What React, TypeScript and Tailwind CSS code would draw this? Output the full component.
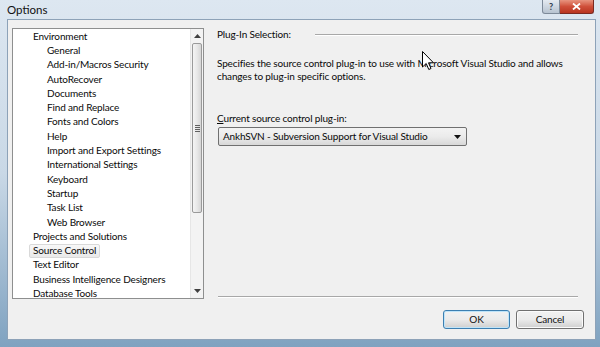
import React from "react";

const font = { fontFamily: 'Lato, "Noto Sans", sans-serif' };

const tree: { label: string; child?: boolean; selected?: boolean }[] = [
  { label: "Environment" },
  { label: "General", child: true },
  { label: "Add-in/Macros Security", child: true },
  { label: "AutoRecover", child: true },
  { label: "Documents", child: true },
  { label: "Find and Replace", child: true },
  { label: "Fonts and Colors", child: true },
  { label: "Help", child: true },
  { label: "Import and Export Settings", child: true },
  { label: "International Settings", child: true },
  { label: "Keyboard", child: true },
  { label: "Startup", child: true },
  { label: "Task List", child: true },
  { label: "Web Browser", child: true },
  { label: "Projects and Solutions" },
  { label: "Source Control", selected: true },
  { label: "Text Editor" },
  { label: "Business Intelligence Designers" },
  { label: "Database Tools" },
];

function ScrollBar() {
  return (
    <div className="w-[13px] h-full flex flex-col bg-[#f3f3f3] border-l border-[#e6e6e6]">
      <div className="h-[14px] flex items-center justify-center">
        <svg width="7" height="4" viewBox="0 0 7 4">
          <path d="M0 4 L3.5 0 L7 4 Z" fill="#404040" />
        </svg>
      </div>
      <div className="h-[170px] mx-[1px] rounded-[2px] border border-[#9a9a9a] bg-gradient-to-r from-[#f4f4f4] via-[#e8e8e8] to-[#d6d6d6] flex items-center justify-center">
        <div className="flex flex-col gap-[1px]">
          <div className="w-[5px] h-[1px] bg-[#606060]" />
          <div className="w-[5px] h-[1px] bg-[#606060]" />
          <div className="w-[5px] h-[1px] bg-[#606060]" />
          <div className="w-[5px] h-[1px] bg-[#606060]" />
        </div>
      </div>
      <div className="flex-1" />
      <div className="h-[14px] flex items-center justify-center">
        <svg width="7" height="4" viewBox="0 0 7 4">
          <path d="M0 0 L3.5 4 L7 0 Z" fill="#404040" />
        </svg>
      </div>
    </div>
  );
}

function Cursor() {
  return (
    <svg
      className="absolute left-[422px] top-[51px]"
      width="13"
      height="20"
      viewBox="0 0 13 20"
    >
      <path
        d="M0.5 0.5 L0.5 16 L4.2 12.5 L6.8 18.5 L9 17.5 L6.5 11.8 L11.5 11.8 Z"
        fill="#ffffff"
        stroke="#000000"
        strokeWidth="1"
        strokeLinejoin="round"
      />
    </svg>
  );
}

export default function App() {
  return (
    <div
      className="relative w-[600px] h-[347px] overflow-hidden flex flex-col bg-gradient-to-b from-[#dde7f1] via-[#c9d8e6] to-[#7fa2c0]"
      style={font}
    >
      {/* title bar */}
      <div className="h-[19px] flex items-start justify-between pl-[7px] pr-[6px]">
        <span className="text-[11.5px] leading-[20px] text-[#111]">Options</span>
        <div className="flex">
          <div className="w-[18px] h-[14px] rounded-bl-[3px] border border-[#7d8a99] border-t-0 bg-gradient-to-b from-[#e4eaf1] to-[#b7c3d0] flex items-center justify-center">
            <span className="text-[9px] leading-none text-[#2b3a4a] font-bold">?</span>
          </div>
          <div className="w-[34px] h-[14px] rounded-br-[3px] border border-[#7a2a22] border-t-0 border-l-0 bg-gradient-to-b from-[#e7937f] via-[#cf4f3a] to-[#b83420] flex items-center justify-center">
            <svg width="9" height="7" viewBox="0 0 9 7">
              <path d="M1 0.5 L8 6.5 M8 0.5 L1 6.5" stroke="#ffffff" strokeWidth="1.8" />
            </svg>
          </div>
        </div>
      </div>

      {/* client area */}
      <div className="ml-[7px] mr-[4px] mb-[7px] flex-1 bg-[#f0f0f0] border border-[#8da2b8] flex flex-col pl-[4px] pr-[11px] pt-[8px] tracking-[-0.15px]">
        <div className="flex h-[271px]">
          {/* tree */}
          <div className="w-[192px] h-full border border-[#8e8f8f] bg-white flex">
            <div className="flex-1 overflow-hidden">
              {tree.map((t) => (
                <div
                  key={t.label}
                  className={`h-[14.3px] flex items-center whitespace-nowrap text-[10px] text-[#0a0a0a] ${
                    t.child ? "pl-[34px]" : "pl-[20px]"
                  }`}
                >
                  {t.selected ? (
                    <span className="-ml-[4px] px-[3px] h-[14px] flex items-center rounded-[2px] border border-[#d9d9d9] bg-gradient-to-b from-[#f8f8f8] to-[#e9e9e9]">
                      {t.label}
                    </span>
                  ) : (
                    t.label
                  )}
                </div>
              ))}
            </div>
            <ScrollBar />
          </div>

          {/* right panel */}
          <div className="flex-1 ml-[13px] mr-[6px] flex flex-col text-[10px] text-[#0a0a0a]">
            <div className="flex items-center h-[13px]">
              <span className="leading-[13px]">Plug-In Selection:</span>
              <div className="flex-1 ml-[24px] h-[1px] bg-[#a8a8a8] border-b border-white box-content" />
            </div>
            <p className="mt-[16px] leading-[13px] pr-[10px]">
              Specifies the source control plug-in to use with Microsoft Visual Studio and allows changes to plug-in specific options.
            </p>
            <div className="mt-[29px] leading-[13px]">
              <span className="underline">C</span>urrent source control plug-in:
            </div>
            <div className="mt-[2px] w-[249px] h-[19px] ml-[1px] rounded-[2px] border border-[#707070] bg-gradient-to-b from-[#f3f3f3] via-[#ebebeb] to-[#d8d8d8] flex items-center justify-between pl-[4px] pr-[5px]">
              <span className="whitespace-nowrap">AnkhSVN - Subversion Support for Visual Studio</span>
              <svg width="7" height="4" viewBox="0 0 7 4">
                <path d="M0 0 L3.5 4 L7 0 Z" fill="#111" />
              </svg>
            </div>
            <div className="flex-1" />
            <div className="ml-[1px] h-[1px] bg-[#a8a8a8] border-b border-white box-content mb-[1px]" />
          </div>
        </div>

        {/* buttons */}
        <div className="mt-[11px] flex justify-end gap-[6px]">
          <div className="w-[67px] h-[19px] rounded-[3px] border border-[#3c7fb1] shadow-[inset_0_0_0_1px_#bfe4f9] bg-gradient-to-b from-[#f2f2f2] via-[#ebebeb] to-[#cfcfcf] flex items-center justify-center text-[10px] text-[#111]">
            OK
          </div>
          <div className="w-[68px] h-[19px] rounded-[3px] border border-[#707070] shadow-[inset_0_0_0_1px_#fbfbfb] bg-gradient-to-b from-[#f2f2f2] via-[#ebebeb] to-[#cfcfcf] flex items-center justify-center text-[10px] text-[#111]">
            Cancel
          </div>
        </div>
      </div>

      <Cursor />
    </div>
  );
}
